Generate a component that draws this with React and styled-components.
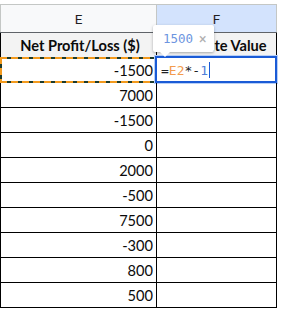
import styled, { createGlobalStyle } from "styled-components";

const GlobalStyle = createGlobalStyle`
  html, body {
    margin: 0;
    padding: 0;
    background: #ffffff;
  }
`;

const rows = [-1500, 7000, -1500, 0, 2000, -500, 7500, -300, 800, 500];

export default function App() {
  return (
    <>
      <GlobalStyle />
      <Sheet>
        <HeaderRow>
          <ColHead>E</ColHead>
          <ColHead $active>F</ColHead>
        </HeaderRow>
        <Row $title>
          <Cell $first $title>Net Profit/Loss ($)</Cell>
          <Cell $title>Absolute Value</Cell>
        </Row>
        {rows.map((value, i) => (
          <Row key={i}>
            <Cell $first $num $copied={i === 0}>
              {value}
            </Cell>
            {i === 0 ? (
              <Cell $editing>
                <Formula>
                  <span>=</span>
                  <Ref>E2</Ref>
                  <span>*-</span>
                  <Num>1</Num>
                  <Caret />
                </Formula>
              </Cell>
            ) : (
              <Cell />
            )}
          </Row>
        ))}
        <Preview>
          <PreviewValue>1500</PreviewValue>
          <Close>×</Close>
        </Preview>
      </Sheet>
    </>
  );
}

const Sheet = styled.div`
  position: relative;
  width: 277px;
  padding-top: 4px;
  font-family: Lato, "Liberation Sans", sans-serif;
`;

const HeaderRow = styled.div`
  display: flex;
  height: 29px;
  box-sizing: border-box;
  border-top: 1px solid #c4c7c5;
  border-bottom: 1px solid #5f6368;
`;

const ColHead = styled.div`
  display: flex;
  align-items: center;
  justify-content: center;
  box-sizing: border-box;
  width: ${(p) => (p.$active ? "120px" : "157px")};
  border-left: ${(p) => (p.$active ? "none" : "1px solid #c4c7c5")};
  border-right: 1px solid #c4c7c5;
  background: ${(p) => (p.$active ? "#d3e3fd" : "#f8f9fa")};
  color: #1f1f1f;
  font-family: Roboto, "Liberation Sans", sans-serif;
  font-size: 13.5px;
`;

const Row = styled.div`
  display: flex;
  height: 25px;
  box-sizing: border-box;
  border-bottom: 1px solid #000;
  background: ${(p) => (p.$title ? "#f3f3f3" : "#fff")};
`;

const Cell = styled.div`
  position: relative;
  display: flex;
  align-items: center;
  justify-content: ${(p) => (p.$num ? "flex-end" : p.$title ? "center" : "flex-start")};
  box-sizing: border-box;
  width: ${(p) => (p.$first ? "157px" : "120px")};
  padding: ${(p) => (p.$num ? "0 3px 0 0" : "0 0 0 3px")};
  border-left: ${(p) => (p.$first ? "1px solid #000" : "none")};
  border-right: 1px solid #000;
  color: #0b0b0b;
  font-size: 14.6px;
  font-weight: ${(p) => (p.$title ? 700 : 400)};
  white-space: nowrap;

  ${(p) =>
    p.$copied &&
    `
    &::after {
      content: "";
      position: absolute;
      top: -1px;
      left: -1px;
      right: -1px;
      bottom: -1px;
      background:
        repeating-linear-gradient(90deg, #f39a1e 0 7px, #1d3b2c 7px 11px) top left / 100% 2px no-repeat,
        repeating-linear-gradient(90deg, #f39a1e 0 7px, #1d3b2c 7px 11px) bottom left / 100% 2px no-repeat,
        repeating-linear-gradient(180deg, #f39a1e 0 7px, #1d3b2c 7px 11px) top left / 2px 100% no-repeat,
        repeating-linear-gradient(180deg, #f39a1e 0 7px, #1d3b2c 7px 11px) top right / 2px 100% no-repeat;
    }
  `}

  ${(p) =>
    p.$editing &&
    `
    &::after {
      content: "";
      position: absolute;
      top: -2px;
      left: -2px;
      right: -1px;
      bottom: -1px;
      border: 2px solid #1a5bd6;
      box-shadow: 0 0 0 1px #b7cff7;
      pointer-events: none;
    }
  `}
`;

const Formula = styled.div`
  display: flex;
  align-items: center;
  padding-left: 1px;
  font-family: "DejaVu Sans Mono", "Liberation Mono", monospace;
  font-size: 13px;
  color: #202124;
`;

const Ref = styled.span`
  color: #f39c4d;
`;

const Num = styled.span`
  color: #4f7fd8;
`;

const Caret = styled.span`
  display: inline-block;
  width: 1px;
  height: 16px;
  margin-left: 1px;
  background: #1a5bd6;
`;

const Preview = styled.div`
  position: absolute;
  z-index: 2;
  left: 153px;
  top: 25px;
  display: flex;
  align-items: center;
  gap: 6px;
  box-sizing: border-box;
  width: 61px;
  height: 27px;
  padding-left: 10px;
  background: #fff;
  border-radius: 2px;
  box-shadow: 0 1px 3px rgba(60, 64, 67, 0.3), 0 1px 2px rgba(60, 64, 67, 0.15);

  &::after {
    content: "";
    position: absolute;
    left: 7px;
    bottom: -5px;
    width: 0;
    height: 0;
    border-left: 5px solid transparent;
    border-right: 5px solid transparent;
    border-top: 5px solid #fff;
  }
`;

const PreviewValue = styled.span`
  font-family: "DejaVu Sans Mono", "Liberation Mono", monospace;
  font-size: 12.5px;
  color: #6d95e0;
`;

const Close = styled.span`
  font-family: Roboto, "Liberation Sans", sans-serif;
  font-size: 14px;
  color: #b0b0b0;
`;
